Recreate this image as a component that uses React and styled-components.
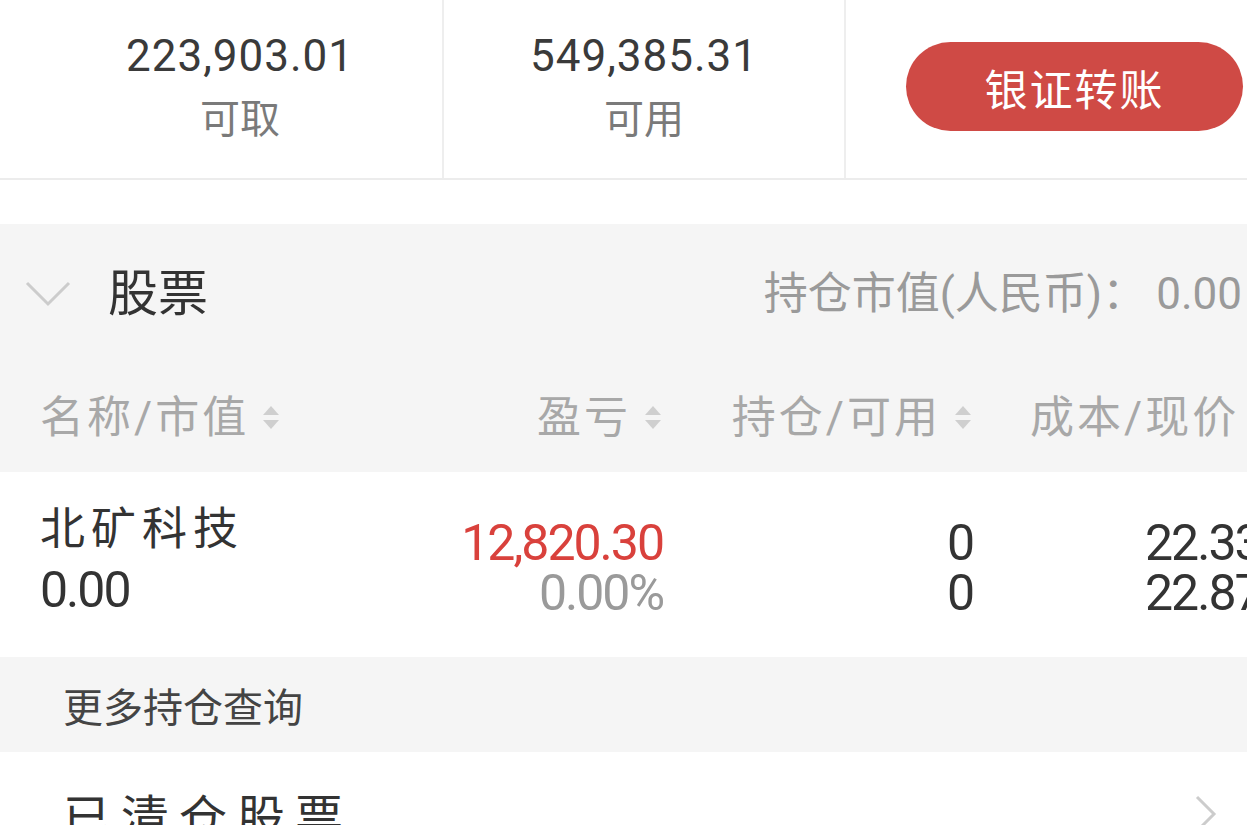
import React from "react";
import styled, { createGlobalStyle } from "styled-components";

const GlobalStyle = createGlobalStyle`
  html, body {
    margin: 0;
    padding: 0;
    background: #fff;
    overflow: hidden;
  }
  body {
    font-family: Roboto, "Noto Sans CJK SC", sans-serif;
    color: #333;
  }
`;

const Page = styled.div`
  width: 1290px;
  background: #fff;
`;

const FundBar = styled.div`
  display: grid;
  grid-template-columns: 444px 402px 1fr;
  height: 178px;
  border-bottom: 2px solid #ececec;
`;

const FundCell = styled.div`
  display: flex;
  flex-direction: column;
  align-items: center;
  padding-top: 30px;
  padding-left: ${(p) => p.$shift || 0}px;
  border-right: 2px solid #eeeeee;
`;

const FundValue = styled.div`
  font-size: 44px;
  line-height: 52px;
  letter-spacing: 1px;
  color: #3a3a3a;
`;

const FundLabel = styled.div`
  margin-top: 14px;
  font-size: 40px;
  line-height: 48px;
  color: #7a7a7a;
`;

const ButtonCell = styled.div`
  display: flex;
  align-items: flex-start;
  padding: 42px 0 0 60px;
`;

const TransferButton = styled.button`
  width: 337px;
  height: 89px;
  border: none;
  border-radius: 45px;
  background: #cf4a45;
  color: #fff;
  font-family: "Noto Sans CJK SC", sans-serif;
  font-size: 43px;
  letter-spacing: 2px;
  padding: 0;
`;

const Section = styled.div`
  margin-top: 44px;
  background: #f5f5f5;
`;

const SectionHead = styled.div`
  display: flex;
  align-items: center;
  height: 140px;
  padding: 0 48px 0 24px;
`;

const Chevron = styled.svg`
  width: 48px;
  height: 28px;
  margin-right: 36px;
`;

const SectionTitle = styled.div`
  font-size: 50px;
  line-height: 60px;
  color: #333;
`;

const HoldingValue = styled.div`
  margin-left: auto;
  font-size: 44px;
  line-height: 50px;
  color: #9a9a9a;
  white-space: nowrap;
`;

const Colon = styled.span`
  margin-right: 10px;
`;

const Columns = styled.div`
  display: grid;
  grid-template-columns: 380px 243px 310px 1fr;
  padding-left: 40px;
  padding-right: 20px;
`;

const HeadRow = styled(Columns)`
  height: 108px;
  align-items: center;
`;

const HeadCell = styled.div`
  display: flex;
  align-items: center;
  justify-content: ${(p) => (p.$right ? "flex-end" : "flex-start")};
  padding-left: ${(p) => p.$indent || 0}px;
  font-size: 44px;
  line-height: 50px;
  color: #a8a8a8;
  letter-spacing: 3px;
  white-space: nowrap;
`;

const SortIcon = styled.svg`
  width: 20px;
  height: 30px;
  margin-left: 12px;
  flex-shrink: 0;
`;

const DataRow = styled(Columns)`
  height: 185px;
  background: #fff;
`;

const DataCell = styled.div`
  display: flex;
  flex-direction: column;
  align-items: ${(p) => (p.$right ? "flex-end" : "flex-start")};
  padding-top: ${(p) => p.$top}px;
  padding-left: ${(p) => p.$indent || 0}px;
  white-space: nowrap;
`;

const StockName = styled.div`
  font-size: 45px;
  line-height: 50px;
  letter-spacing: 6px;
  color: #333;
  margin-bottom: 10px;
`;

const Num = styled.div`
  font-size: 50px;
  line-height: 50px;
  letter-spacing: -2px;
  color: ${(p) => p.$color || "#333"};
`;

const MoreRow = styled.div`
  height: 95px;
  display: flex;
  align-items: center;
  padding-left: 63px;
  background: #f5f5f5;
  font-size: 40px;
  color: #444;
`;

const ClearedRow = styled.div`
  display: flex;
  align-items: center;
  height: 124px;
  padding: 0 72px 0 63px;
  background: #fff;
`;

const ClearedTitle = styled.div`
  font-size: 48px;
  letter-spacing: 10px;
  color: #333;
`;

const Arrow = styled.svg`
  width: 24px;
  height: 40px;
  margin-left: auto;
`;

const Sort = () => (
  <SortIcon viewBox="0 0 20 30">
    <polygon points="2,12 10,3 18,12" fill="#cfcfcf" />
    <polygon points="2,17 10,26 18,17" fill="#cfcfcf" />
  </SortIcon>
);

const App = () => {
  return (
    <>
      <GlobalStyle />
      <Page>
        <FundBar>
          <FundCell $shift={38}>
            <FundValue>223,903.01</FundValue>
            <FundLabel>可取</FundLabel>
          </FundCell>
          <FundCell>
            <FundValue>549,385.31</FundValue>
            <FundLabel>可用</FundLabel>
          </FundCell>
          <ButtonCell>
            <TransferButton>银证转账</TransferButton>
          </ButtonCell>
        </FundBar>

        <Section>
          <SectionHead>
            <Chevron viewBox="0 0 48 28">
              <polyline points="3,3 24,24 45,3" fill="none" stroke="#cccccc" strokeWidth="3" />
            </Chevron>
            <SectionTitle>股票</SectionTitle>
            <HoldingValue>
              持仓市值(人民币)<Colon>：</Colon>0.00
            </HoldingValue>
          </SectionHead>
          <HeadRow>
            <HeadCell>
              名称/市值
              <Sort />
            </HeadCell>
            <HeadCell $right>
              盈亏
              <Sort />
            </HeadCell>
            <HeadCell $right>
              持仓/可用
              <Sort />
            </HeadCell>
            <HeadCell $indent={57}>
              成本/现价
              <Sort />
            </HeadCell>
          </HeadRow>
        </Section>

        <DataRow>
          <DataCell $top={33}>
            <StockName>北矿科技</StockName>
            <Num>0.00</Num>
          </DataCell>
          <DataCell $right $top={46}>
            <Num $color="#d9413c">12,820.30</Num>
            <Num $color="#9a9a9a">0.00%</Num>
          </DataCell>
          <DataCell $right $top={46}>
            <Num>0</Num>
            <Num>0</Num>
          </DataCell>
          <DataCell $top={46} $indent={172}>
            <Num>22.33</Num>
            <Num>22.87</Num>
          </DataCell>
        </DataRow>

        <MoreRow>更多持仓查询</MoreRow>

        <ClearedRow>
          <ClearedTitle>已清仓股票</ClearedTitle>
          <Arrow viewBox="0 0 24 40">
            <polyline points="3,3 20,20 3,37" fill="none" stroke="#cccccc" strokeWidth="3" />
          </Arrow>
        </ClearedRow>
      </Page>
    </>
  );
};

export default App;
